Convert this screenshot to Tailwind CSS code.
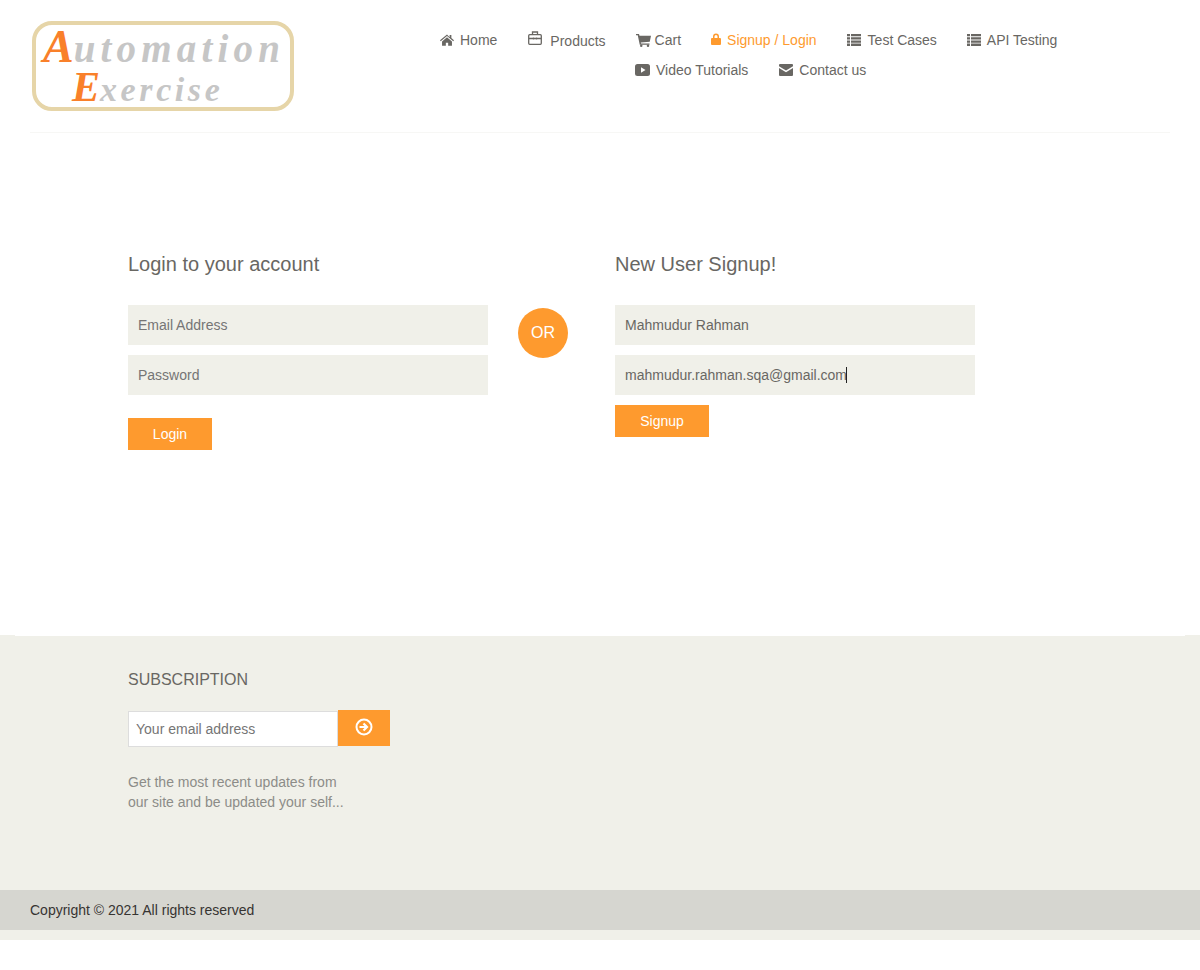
<!DOCTYPE html>
<html lang="en">
<head>
  <meta charset="UTF-8" />
  <title>Automation Exercise - Signup / Login</title>
  <script src="https://cdn.jsdelivr.net/npm/@tailwindcss/browser@4"></script>
</head>
<body class="bg-white font-['Liberation_Sans',Arial,sans-serif] text-[14px] text-[#696763]">

  <!-- header -->
  <header class="mx-[30px] h-[133px] border-b border-[#f7f7f5] flex">
    <a href="#" class="mt-[21px] ml-[2px] w-[262px] h-[90px] border-[4px] border-[#e6d5a8] rounded-[20px] flex flex-col font-['Liberation_Serif',serif] italic text-[#c6c6c6] font-bold overflow-hidden">
      <span class="h-[44px] pl-[7px] pt-[1px] text-[39px] leading-[42px] tracking-[5.200px] whitespace-nowrap"><span class="text-[#f9802a] text-[46px] leading-[42px] tracking-[0px]">A</span>utomation</span>
      <span class="h-[38px] pl-[36px] text-[34px] leading-[36px] tracking-[3.600px] whitespace-nowrap"><span class="text-[#f9802a] text-[42px] leading-[36px] tracking-[0px]">E</span>xercise</span>
    </a>
    <nav class="ml-[146px] pt-[30px] flex flex-col gap-[10px]">
      <div class="flex items-center h-[20px]">
        <a href="#" class="flex items-center mr-[31px]">
          <svg class="w-[14px] h-[12px] mr-[6px]" viewBox="0 0 24 20" fill="#696763"><path d="M12 .5 0 10.500l1.300 1.600L12 3l10.700 9.100 1.300-1.600-4.500-3.900V1.500h-3v3.600zM3.500 12.500V20H10v-5.500h4V20h6.500v-7.500L12 5.300z"/></svg>
          Home
        </a>
        <a href="#" class="flex items-center mr-[30px]">
          <svg class="w-[14px] h-[14px] mr-[8px] -mt-[4px]" viewBox="0 0 14 14" fill="none" stroke="#696763" stroke-width="1.300"><rect x="0.700" y="3.700" width="12.600" height="9.600" rx="1"/><path d="M4.500 3.500V1h5v2.500M1 7.500h12M5.500 6.500v2M8.500 6.500v2"/></svg>
          <span class="mt-[2px]">Products</span>
        </a>
        <a href="#" class="flex items-center mr-[29px]">
          <svg class="w-[15px] h-[13px] mr-[4px]" viewBox="0 0 30 26" fill="#696763"><path d="M0 0h6l1 3.500h23l-2.500 12-18 1.500.5 2H27v2.500H7.500L3.500 2.500H0z"/><circle cx="10.500" cy="23.500" r="2.500"/><circle cx="24" cy="23.500" r="2.500"/></svg>
          Cart
        </a>
        <a href="#" class="flex items-center mr-[30px] text-[#fe9a2e]">
          <svg class="w-[10px] h-[12px] mr-[6px] ml-px -mt-[2px]" viewBox="0 0 20 24" fill="#fe9a2e"><path d="M4 10V7a6 6 0 0 1 12 0v3h2a2 2 0 0 1 2 2v10a2 2 0 0 1-2 2H2a2 2 0 0 1-2-2V12a2 2 0 0 1 2-2zm3 0h6V7a3 3 0 0 0-6 0z"/></svg>
          Signup / Login
        </a>
        <a href="#" class="flex items-center mr-[30px]">
          <svg class="w-[14px] h-[12px] mr-[7px] -mt-px" viewBox="0 0 14 12" fill="#696763"><path d="M0 0h3v2.300H0zM4 0h10v2.300H4zM0 3.200h3v2.300H0zM4 3.200h10v2.300H4zM0 6.400h3v2.300H0zM4 6.400h10v2.300H4zM0 9.600h3V12H0zM4 9.600h10V12H4z"/></svg>
          Test Cases
        </a>
        <a href="#" class="flex items-center">
          <svg class="w-[14px] h-[12px] mr-[6px] -mt-px" viewBox="0 0 14 12" fill="#696763"><path d="M0 0h3v2.300H0zM4 0h10v2.300H4zM0 3.200h3v2.300H0zM4 3.200h10v2.300H4zM0 6.400h3v2.300H0zM4 6.400h10v2.300H4zM0 9.600h3V12H0zM4 9.600h10V12H4z"/></svg>
          API Testing
        </a>
      </div>
      <div class="flex items-center h-[20px] pl-[195px]">
        <a href="#" class="flex items-center mr-[30px]">
          <svg class="w-[15px] h-[12px] mr-[6px]" viewBox="0 0 15 12"><rect width="15" height="12" rx="2.500" fill="#696763"/><path d="M6 3.200v5.600l4.500-2.800z" fill="#fff"/></svg>
          Video Tutorials
        </a>
        <a href="#" class="flex items-center">
          <svg class="w-[14px] h-[12px] mr-[6px] ml-px" viewBox="0 0 14 12" fill="#696763"><path d="M1 0h12a1 1 0 0 1 1 1v1.300L7 6.500 0 2.300V1a1 1 0 0 1 1-1z"/><path d="M0 4 7 8.200 14 4v7a1 1 0 0 1-1 1H1a1 1 0 0 1-1-1z"/></svg>
          Contact us
        </a>
      </div>
    </nav>
  </header>

  <!-- forms -->
  <main class="h-[502px] pl-[128px] pt-[118px] flex">
    <section class="w-[360px]">
      <h2 class="text-[20px] leading-[26px] mb-[28px]">Login to your account</h2>
      <input type="email" placeholder="Email Address" class="block w-full h-[40px] mb-[10px] px-[10px] bg-[#f0f0e9] placeholder:text-[#757575] outline-none" />
      <input type="password" placeholder="Password" class="block w-full h-[40px] mb-[23px] px-[10px] bg-[#f0f0e9] placeholder:text-[#757575] outline-none" />
      <button class="block w-[84px] h-[32px] bg-[#fe9a2e] text-white">Login</button>
    </section>

    <div class="ml-[30px] mt-[57px] w-[50px] h-[50px] rounded-full bg-[#fe9a2e] text-white text-[16px] flex items-center justify-center">OR</div>

    <section class="ml-[47px] w-[360px]">
      <h2 class="text-[20px] leading-[26px] mb-[28px]">New User Signup!</h2>
      <input type="text" value="Mahmudur Rahman" class="block w-full h-[40px] mb-[10px] px-[10px] bg-[#f0f0e9] outline-none" />
      <div class="relative mb-[10px]">
        <input type="email" value="mahmudur.rahman.sqa@gmail.com" class="block w-full h-[40px] px-[10px] bg-[#f0f0e9] outline-none" />
        <span class="absolute left-[231px] top-[12px] w-px h-[16px] bg-[#222]"></span>
      </div>
      <button class="block w-[94px] h-[32px] bg-[#fe9a2e] text-white">Signup</button>
    </section>
  </main>

  <!-- footer -->
  <footer class="bg-[#f0f0e9] h-[305px] flex flex-col">
    <div class="h-px mx-[15px] bg-white"></div>
    <div class="flex-1 pl-[128px] pt-[34px]">
      <h2 class="text-[16px] leading-[20px] mb-[20px]">SUBSCRIPTION</h2>
      <form class="flex items-start">
        <input type="email" placeholder="Your email address" class="block w-[210px] h-[36px] mt-px px-[7px] bg-white border border-[#dddddd] placeholder:text-[#757575] outline-none" />
        <button type="button" class="w-[52px] h-[36px] bg-[#fe9a2e] flex items-center justify-center">
          <svg class="w-[18px] h-[18px] -mt-[2px]" viewBox="0 0 18 18" fill="none" stroke="#fff"><circle cx="9" cy="9" r="7.500" stroke-width="2"/><path d="M4.500 9h7M8.500 5.500 12 9l-3.500 3.500" stroke-width="2.200"/></svg>
        </button>
      </form>
      <p class="mt-[25px] leading-[20px] text-[#8c8c88]">Get the most recent updates from<br />our site and be updated your self...</p>
    </div>
    <div class="h-[40px] mb-[10px] pl-[30px] bg-[#d6d6d0] text-[#363432] flex items-center">Copyright © 2021 All rights reserved</div>
  </footer>

</body>
</html>
